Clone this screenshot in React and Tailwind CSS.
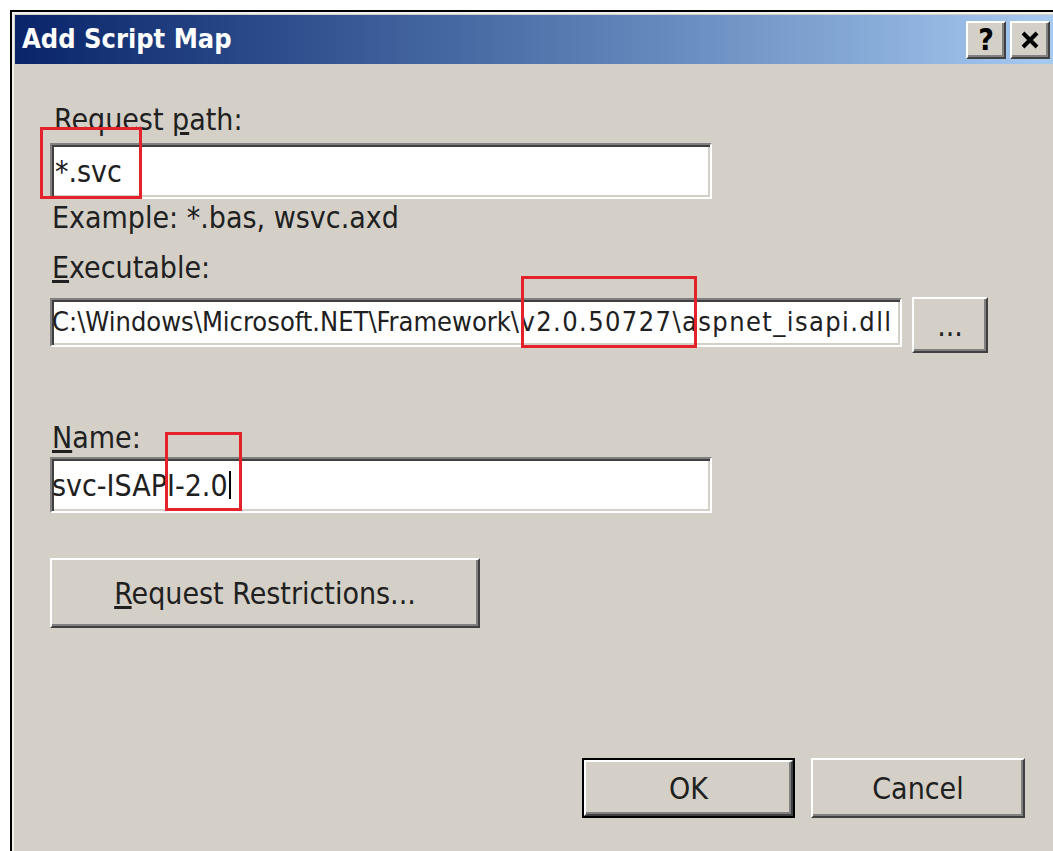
const font = { fontFamily: '"DejaVu Sans Condensed", "DejaVu Sans", sans-serif' };

// classic raised 3D edge
const raised =
    'border-2 border-t-white border-l-white border-r-[#404040] border-b-[#404040] shadow-[inset_-2px_-2px_0_#808080]';
// classic sunken field edge
const sunken =
    'border-2 border-t-[#808080] border-l-[#808080] border-r-white border-b-white shadow-[inset_2px_2px_0_#404040,inset_-2px_-2px_0_#d4d0c8]';

const Mark = ({ className }) => (
    <div
        className={`pointer-events-none absolute border-[3px] border-[#e3222b] ${className}`}
    />
);

const Field = ({ className = '', children }) => (
    <div
        className={`flex items-center bg-white text-[#202020] ${sunken} ${className}`}
    >
        {children}
    </div>
);

const Button = ({ className = '', children }) => (
    <div
        className={`flex items-center justify-center bg-[#d4d0c8] text-[30px] text-[#202020] ${raised} ${className}`}
    >
        {children}
    </div>
);

const TitleButton = ({ children }) => (
    <div
        className={`flex h-[38px] w-[40px] items-center justify-center bg-[#d4d0c8] ${raised}`}
    >
        {children}
    </div>
);

export default function App() {
    return (
        <div
            className="h-[851px] w-[1053px] overflow-hidden bg-white pt-[10px] pl-[10px]"
            style={font}
        >
            <div className="h-full border-t-2 border-l-2 border-black">
                <div className="relative flex h-full flex-col border-t-2 border-l-2 border-[#f2f0ec] bg-[#d4d0c8] pt-[1px] pl-[1px]">
                    {/* title bar */}
                    <div className="flex h-[49px] items-center bg-gradient-to-r from-[#0a246a] to-[#a6caf0] pr-[3px] pl-[7px]">
                        <span className="text-[27px] font-bold text-white">
                            Add Script Map
                        </span>
                        <div className="ml-auto flex gap-[4px]">
                            <TitleButton>
                                <span className="text-[30px] leading-none font-bold text-black">
                                    ?
                                </span>
                            </TitleButton>
                            <TitleButton>
                                <svg width="20" height="18" viewBox="0 0 20 18">
                                    <path
                                        d="M3 2 L17 16 M17 2 L3 16"
                                        stroke="black"
                                        strokeWidth="4"
                                    />
                                </svg>
                            </TitleButton>
                        </div>
                    </div>

                    <div className="flex flex-col pl-[35px] text-[30px] text-[#202020]">
                        <div className="mt-[37px] h-[38px] pl-[4px] leading-[38px]">
                            Request <span className="underline">p</span>ath:
                        </div>
                        <Field className="mt-[4px] h-[56px] w-[662px] pl-[3px] text-[30px]">
                            *.svc
                        </Field>
                        <div className="h-[38px] pl-[2px] leading-[38px]">
                            Example: *.bas, wsvc.axd
                        </div>
                        <div className="mt-[12px] h-[38px] pl-[2px] leading-[38px]">
                            <span className="underline">E</span>xecutable:
                        </div>
                        <div className="mt-[10px] flex items-start gap-[10px]">
                            <Field className="mt-[1px] h-[49px] w-[852px] pl-0 text-[27px] whitespace-nowrap">
                                C:\Windows\Microsoft.NET\Framework
                                <span className="tracking-[1.4px]">
                                    \v2.0.50727\aspnet_isapi.dll
                                </span>
                            </Field>
                            <Button className="h-[56px] w-[76px]">...</Button>
                        </div>
                        <div className="mt-[66px] h-[38px] pl-[2px] leading-[38px]">
                            <span className="underline">N</span>ame:
                        </div>
                        <Field className="h-[56px] w-[662px] pl-0 text-[30px]">
                            svc-ISAPI-2.0
                            <span className="ml-[1px] h-[28px] w-[2px] bg-black" />
                        </Field>
                        <Button className="mt-[45px] h-[70px] w-[430px]">
                            <span>
                                <span className="underline">R</span>equest Restrictions...
                            </span>
                        </Button>
                        <div className="mt-[130px] flex gap-[16px] pl-[532px]">
                            <div className="border-2 border-black">
                                <Button className="h-[56px] w-[209px]">OK</Button>
                            </div>
                            <Button className="h-[60px] w-[214px]">Cancel</Button>
                        </div>
                    </div>

                    {/* highlight boxes */}
                    <Mark className="top-[113px] left-[26px] h-[72px] w-[102px]" />
                    <Mark className="top-[262px] left-[507px] h-[72px] w-[176px]" />
                    <Mark className="top-[418px] left-[151px] h-[79px] w-[77px]" />
                </div>
            </div>
        </div>
    );
}
